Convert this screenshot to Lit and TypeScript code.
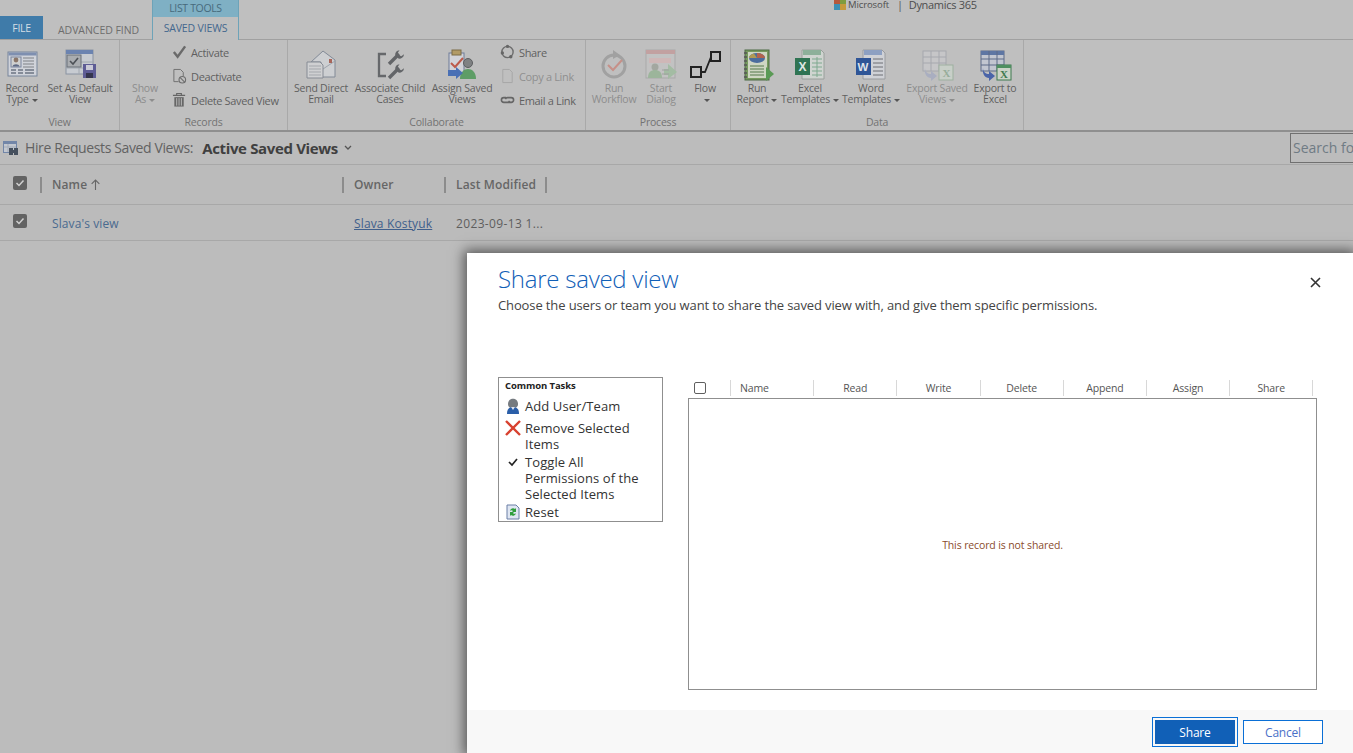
import { LitElement, html, css, svg } from "lit";
import { customElement } from "lit/decorators.js";

const icons: Record<string, any> = {
  record: svg`<rect x="2" y="3" width="29" height="24" fill="#d0d3da" stroke="#78869b"/><rect x="2.500" y="3.500" width="28" height="3" fill="#7e8fb0"/><rect x="5" y="8" width="10" height="10" fill="#cfd0d0" stroke="#7a86a0"/><circle cx="10" cy="11" r="2.400" fill="#8a7568"/><path d="M6.500 17.500c.5-3 6.500-3 7 0z" fill="#5d6985"/><path d="M17 9h11M17 12h11M17 15h11M17 18h11" stroke="#7f8186"/><path d="M5 21h5M12 21h5M19 21h9M5 24h5M12 24h5M19 24h9" stroke="#858c98" stroke-width="2"/>`,
  setdefault: svg`<rect x="2" y="1" width="27" height="24" fill="#c7cbd1" stroke="#8a93a2"/><rect x="2" y="1" width="27" height="4" fill="#6b83b0"/><path d="M2 13h27M2 19h27M15 13v12" stroke="#a2a8b0"/><rect x="3" y="6" width="14" height="12" fill="#a9acb0" stroke="#6b7078"/><path d="M6 12l3 3 5-6" stroke="#4d5157" stroke-width="1.600" fill="none"/><rect x="19" y="15" width="13" height="14" fill="#5e5c95"/><rect x="22" y="16" width="7" height="5" fill="#c9c9d6"/><rect x="22" y="24" width="7" height="5" fill="#35354e"/>`,
  email: svg`<path d="M6 13L18 2l12 9v17H16V13z" fill="#cdcfd2" stroke="#828a97"/><path d="M7 12l11 8 12-8" fill="none" stroke="#9da3ac"/><rect x="24" y="10" width="3" height="4" fill="#a8665a"/><path d="M2 13h13l3 3v13H2z" fill="#cfd0d2" stroke="#868b94"/><path d="M4 17h12M4 20h12M4 23h12M4 26h12" stroke="#a4a7ac"/>`,
  assoc: svg`<path d="M12 5H5v22h7" fill="none" stroke="#66686b" stroke-width="2.300"/><path d="M15 15L25 5" stroke="#636568" stroke-width="3.400"/><path d="M25.500 1.200a4.800 4.800 0 0 0-4.300 5l3.600 3.600a4.800 4.800 0 0 0 5.200-4.600l-2.800 2-2.600-1.200-.6-2.600z" fill="#636568"/><path d="M15 29l10-10" stroke="#636568" stroke-width="3.400"/><path d="M25.500 15.200a4.800 4.800 0 0 0-4.300 5l3.600 3.600a4.800 4.800 0 0 0 5.200-4.600l-2.800 2-2.600-1.200-.6-2.600z" fill="#636568"/>`,
  assign: svg`<rect x="3" y="4" width="15" height="21" fill="#d2d3d8" stroke="#6e7c99"/><rect x="6" y="1" width="9" height="5" fill="#b29b66" stroke="#7d6d46"/><path d="M5 14l4 4 8-9" fill="none" stroke="#bd5a4a" stroke-width="2"/><circle cx="22" cy="14" r="4.500" fill="#7f8183" stroke="#5d5f61"/><path d="M14 30c0-7 4-10 8-10s8 3 8 10z" fill="#5e9d66"/><path d="M2 21h8v-3l7 6-7 6v-3H2z" fill="#4a70b5"/>`,
  runwf: svg`<circle cx="16" cy="17" r="11" fill="none" stroke="#a1a1a1" stroke-width="3"/><path d="M15 1l7 5-7 4z" fill="#a1a1a1"/><path d="M10 16l5 5 9-10" fill="none" stroke="#c69088" stroke-width="2"/>`,
  dialog: svg`<rect x="1" y="1" width="29" height="28" fill="#c2c2c2" stroke="#a9a9a9"/><rect x="1" y="1" width="29" height="4" fill="#c2a1a1"/><rect x="4" y="9" width="22" height="5" fill="#cfb7b7"/><circle cx="10" cy="18" r="3.500" fill="#a3a7a0"/><path d="M3 29c0-6 3-8 7-8s7 2 7 8z" fill="#9cb59b"/><path d="M19 20h4v-5l9 8-9 7v-4h-4z" fill="#a3bca3"/><path d="M17 21h7M17 25h7" stroke="#a0a0a0"/>`,
  flow: svg`<rect x="2" y="18" width="10" height="10" fill="none" stroke="#222" stroke-width="2"/><rect x="22" y="3" width="9" height="9" fill="none" stroke="#222" stroke-width="2"/><path d="M12 23h4l6-15h0" fill="none" stroke="#222" stroke-width="1.800"/>`,
  report: svg`<rect x="4" y="1" width="24" height="30" fill="#779a5f" stroke="#4d6b45"/><path d="M3 4h3M3 8h3M3 12h3M3 16h3M3 20h3M3 24h3M3 28h3" stroke="#555" stroke-width="1.500"/><rect x="7" y="3" width="19" height="26" fill="#cfd6c3"/><ellipse cx="16" cy="9" rx="8" ry="5" fill="#4b6d9d"/><path d="M16 9V4a8 5 0 0 1 8 5z" fill="#b2634f"/><path d="M16 9l-8 0a8 5 0 0 1 5-4.500z" fill="#b09a55"/><path d="M9 17h14M9 20h14M9 23h14M9 26h14" stroke="#55784a"/><path d="M25 18l8 7-8 7z" fill="#5a9a55"/>`,
  excel: svg`<path d="M8 1h19l3 3v26H8z" fill="#cfd4d0" stroke="#9aa09c"/><rect x="9" y="1" width="18" height="5" fill="#8db09a"/><path d="M18 10h10M18 14h10M18 18h10M18 22h10M18 26h10M23 8v20" stroke="#7fa98f"/><rect x="1" y="9" width="15" height="17" fill="#2f7453"/><text x="4.500" y="22" font-size="12" font-weight="700" fill="#dfe8e2" font-family="Liberation Sans">X</text>`,
  word: svg`<path d="M8 1h19l3 3v26H8z" fill="#cfd1d6" stroke="#9a9ca0"/><rect x="9" y="1" width="18" height="5" fill="#8da0c2"/><path d="M18 10h10M18 14h10M18 18h10M18 22h10M18 26h10" stroke="#6c6f75"/><rect x="1" y="9" width="15" height="17" fill="#2f5597"/><text x="2.500" y="22" font-size="11.500" font-weight="700" fill="#dfe3ea" font-family="Liberation Sans">W</text>`,
  exportsaved: svg`<rect x="2" y="2" width="23" height="20" fill="#c6c6c8" stroke="#a6a8ae"/><path d="M2 8h23M2 14h23M10 2v20M18 2v20" stroke="#a6a8ae"/><path d="M4 19c0 4 3 6 6 6v-3l6 5-6 5v-3c-4 0-7-4-6-10z" fill="#a9aec0"/><rect x="18" y="16" width="14" height="15" fill="#c8cfc8" stroke="#9db09f"/><text x="21.500" y="28" font-size="11" font-weight="700" fill="#97ad9a" font-family="Liberation Serif">X</text>`,
  exportexcel: svg`<rect x="2" y="2" width="23" height="20" fill="#c2c6d0" stroke="#5d6a88"/><rect x="2" y="2" width="23" height="4" fill="#5e76a3"/><path d="M2 10h23M2 16h23M10 2v20M18 2v20" stroke="#5d6a88"/><path d="M4 19c0 4 3 6 6 6v-3l6 5-6 5v-3c-4 0-7-4-6-10z" fill="#4a64a8"/><rect x="18" y="16" width="14" height="15" fill="#ccd3c8" stroke="#3f7a50"/><rect x="18" y="16" width="14" height="3" fill="#4f8f60"/><text x="21" y="29" font-size="11" font-weight="700" fill="#3f7a50" font-family="Liberation Serif">X</text>`,
};

const smallIcons: Record<string, any> = {
  check: svg`<path d="M2 8l4 5 8-11" fill="none" stroke="#6a6a6a" stroke-width="2.600"/>`,
  deact: svg`<path d="M2 1h7l3 3v4M2 1v13h5" fill="none" stroke="#6e6e6e"/><circle cx="11" cy="12" r="3.500" fill="none" stroke="#6e6e6e" stroke-width="1.200"/><path d="M8.500 9.500l5 5" stroke="#6e6e6e" stroke-width="1.200"/>`,
  trash: svg`<path d="M1 3h13M5 3V1h5v2" fill="none" stroke="#666" stroke-width="1.200"/><path d="M2.500 5h10v10h-10z" fill="#666"/><path d="M5 6v8M7.500 6v8M10 6v8" stroke="#bdbdbd"/>`,
  share: svg`<circle cx="8" cy="8" r="6" fill="none" stroke="#6d6d6d" stroke-width="1.500"/><circle cx="8" cy="2" r="1.800" fill="#666"/><circle cx="2.500" cy="9" r="1.800" fill="#666"/><circle cx="11.500" cy="13" r="1.800" fill="#666"/>`,
  copy: svg`<path d="M3 1h7l3 3v11H3z" fill="none" stroke="#a5a5a5"/>`,
  link: svg`<path d="M6.500 5.500H4a2.500 2.500 0 0 0 0 5h4a2.500 2.500 0 0 0 2.300-1.500M9.500 10.500H12a2.500 2.500 0 0 0 0-5H8a2.500 2.500 0 0 0-2.300 1.500" fill="none" stroke="#666" stroke-width="1.700"/>`,
};

type Big = { w: number; lines: string[]; icon?: string; caret?: boolean; dim?: boolean };
type Small = { label: string; icon: string; dim?: boolean };
type Group = { label: string; w: number; big: Big[]; small?: Small[] };

const groups: Group[] = [
  { label: "View", w: 120, big: [
    { w: 44, lines: ["Record", "Type"], icon: "record", caret: true },
    { w: 72, lines: ["Set As Default", "View"], icon: "setdefault" },
  ] },
  { label: "Records", w: 168, big: [{ w: 50, lines: ["Show", "As"], caret: true, dim: true }], small: [
    { label: "Activate", icon: "check" },
    { label: "Deactivate", icon: "deact" },
    { label: "Delete Saved View", icon: "trash" },
  ] },
  { label: "Collaborate", w: 298, big: [
    { w: 66, lines: ["Send Direct", "Email"], icon: "email" },
    { w: 72, lines: ["Associate Child", "Cases"], icon: "assoc" },
    { w: 72, lines: ["Assign Saved", "Views"], icon: "assign" },
  ], small: [
    { label: "Share", icon: "share" },
    { label: "Copy a Link", icon: "copy", dim: true },
    { label: "Email a Link", icon: "link" },
  ] },
  { label: "Process", w: 145, big: [
    { w: 56, lines: ["Run", "Workflow"], icon: "runwf", dim: true },
    { w: 38, lines: ["Start", "Dialog"], icon: "dialog", dim: true },
    { w: 50, lines: ["Flow", ""], icon: "flow", caret: true },
  ] },
  { label: "Data", w: 293, big: [
    { w: 52, lines: ["Run", "Report"], icon: "report", caret: true },
    { w: 54, lines: ["Excel", "Templates"], icon: "excel", caret: true },
    { w: 68, lines: ["Word", "Templates"], icon: "word", caret: true },
    { w: 64, lines: ["Export Saved", "Views"], icon: "exportsaved", caret: true, dim: true },
    { w: 52, lines: ["Export to", "Excel"], icon: "exportexcel" },
  ] },
];

const perms = ["Read", "Write", "Delete", "Append", "Assign", "Share"];

@customElement("app-root")
export class AppRoot extends LitElement {
  static styles = css`
    :host {
      display: block;
      position: relative;
      width: 1353px;
      height: 753px;
      overflow: hidden;
      background: #bcbcbc;
      color: #5f5f5f;
      font-family: "Open Sans", "Noto Sans", sans-serif;
      font-size: 11px;
      letter-spacing: -0.35px;
    }
    .tabs { display: flex; height: 40px; border-bottom: 1px solid #a0a0a0; box-sizing: border-box; background: #bfbfbf; }
    .file { width: 43px; height: 23px; margin-top: 16px; background: #3f7ba9; color: #d4dee6; display: flex; align-items: center; justify-content: center; font-size: 10.500px; }
    .adv { width: 109px; padding: 23px 0 0 15px; box-sizing: border-box; color: #6d6d6d; font-size: 10.500px; white-space: nowrap; letter-spacing: -0.05px; }
    .ctx { width: 87px; height: 40px; border: solid #6da3b8; border-width: 0 1px; box-sizing: border-box; display: flex; flex-direction: column; align-items: center; text-align: center; background: #bfbfbf; }
    .ctx-top { align-self: stretch; height: 17px; background: #7fb0c4; color: #476a7c; line-height: 16px; font-size: 10.500px; }
    .ctx-body { color: #43678e; font-size: 10.500px; padding-top: 4px; letter-spacing: -0.15px; }
    .brand { display: flex; align-items: center; margin: -5px 0 0 595px; height: 18px; color: #4e4e4e; white-space: nowrap; }
    .ms { display: grid; grid-template-columns: 6px 6px; grid-auto-rows: 6px; margin-right: 2px; }
    .ms i:nth-child(1) { background: #b6583c; }
    .ms i:nth-child(2) { background: #7f9c3d; }
    .ms i:nth-child(3) { background: #3c8fb5; }
    .ms i:nth-child(4) { background: #c69a3a; }
    .msname { font-size: 9.500px; letter-spacing: -0.1px; }
    .bar { margin: 0 6px 0 8px; color: #555; }
    .d365 { font-size: 11px; letter-spacing: -0.3px; }

    .ribbon { display: flex; height: 90px; border-bottom: 2px solid #8f8f8f; background: #bfbfbf; }
    .group { display: flex; flex-direction: column; border-right: 1px solid #a9a9a9; box-sizing: border-box; }
    .group-body { display: flex; height: 75px; flex: none; }
    .group-label { text-align: center; line-height: 14px; height: 15px; color: #737373; font-size: 10.500px; letter-spacing: -0.2px; }
    .big { display: flex; flex-direction: column; align-items: center; padding-top: 9px; box-sizing: border-box; }
    .big.dim { color: #8d8d8d; }
    .big-icon { width: 33px; height: 33px; flex: none; }
    .no-icon { height: 33px; flex: none; }
    .big-text { margin-top: 1px; text-align: center; line-height: 11px; white-space: nowrap; font-size: 10.500px; letter-spacing: -0.22px; }
    .big-text div { min-height: 11px; }
    .caret { display: inline-block; width: 0; height: 0; margin-left: 3px; vertical-align: 1px; border: solid transparent; border-width: 3px 3px 0; border-top-color: #555; }
    .dim .caret { border-top-color: #8d8d8d; }
    .small-col { display: flex; flex-direction: column; padding: 0 0 0 2px; }
    .small { display: flex; align-items: center; height: 24px; gap: 4px; white-space: nowrap; }
    .small svg { width: 15px; height: 16px; flex: none; }
    .small.dim { color: #8f8f8f; }

    .viewbar { display: flex; align-items: center; height: 32px; border-bottom: 1px solid #a8a8a8; overflow: hidden; }
    .viewbar-left { width: 1290px; flex: none; display: flex; align-items: center; box-sizing: border-box; padding-left: 3px; }
    .vb-icon { width: 17px; height: 17px; margin-right: 5px; }
    .vb-entity { font-size: 14px; color: #626262; letter-spacing: -0.38px; margin-top: -1px; }
    .vb-name { font-size: 15px; font-weight: 700; color: #404040; margin: -1px 0 0 9px; letter-spacing: -0.35px; }
    .vb-chev { margin-left: 6px; width: 8px; height: 6px; }
    .search { flex: none; width: 120px; height: 30px; border: 1px solid #707070; box-sizing: border-box; padding-left: 2px; line-height: 28px; font-size: 14px; color: #6f7b84; white-space: nowrap; letter-spacing: 0; }

    .ghead, .grow { display: flex; align-items: center; border-bottom: 1px solid #a8a8a8; background: #bbbbbb; font-size: 12px; }
    .ghead { height: 39px; color: #666; font-weight: 600; letter-spacing: 0.12px; }
    .grow { height: 35px; letter-spacing: 0.1px; }
    .gcheck { width: 40px; flex: none; padding-left: 13px; box-sizing: border-box; display: flex; margin-bottom: 3px; }
    .box { width: 14px; height: 14px; border-radius: 2px; background: #636363; display: flex; align-items: center; justify-content: center; }
    .box svg { width: 10px; height: 10px; }
    .gc { flex: none; box-sizing: border-box; padding-left: 10px; height: 16px; line-height: 16px; white-space: nowrap; }
    .ghead .gc { border-left: 2px solid #8c8c8c; }
    .grow .gc { padding-left: 12px; margin-top: 2px; }
    .c1 { width: 302px; }
    .c2 { width: 102px; }
    .c3 { width: 103px; }
    .ghead .c3 { border-right: 2px solid #8c8c8c; }
    .arrow { width: 11px; height: 11px; margin-left: 0; vertical-align: -1px; }
    .lnk { color: #4a6a8f; }
    .lnk2 { color: #41608c; text-decoration: underline; letter-spacing: 0.15px; }
    .date { color: #5e5e5e; letter-spacing: 0.35px; }

    .dialog { position: absolute; left: 467px; top: 253px; right: 0; bottom: 0; background: #fff; box-shadow: 0 0 12px 3px rgba(0,0,0,.55); display: flex; flex-direction: column; color: #444; }
    .dlg-main { flex: 1; padding: 10px 36px 0 31px; display: flex; flex-direction: column; min-height: 0; }
    .dlg-head { display: flex; justify-content: space-between; align-items: flex-start; }
    .dlg-title { font-size: 24px; font-weight: 300; color: #1160b7; line-height: 32px; letter-spacing: -0.25px; }
    .dlg-sub { font-size: 13px; line-height: 18px; color: #444; letter-spacing: -0.12px; margin-top: 1px; white-space: nowrap; }
    .close { width: 11px; height: 11px; margin: 14px -4px 0 0; }
    .dlg-body { display: flex; margin-top: 63px; gap: 25px; flex: 1; min-height: 0; }
    .tasks { width: 165px; height: 145px; border: 1px solid #8f8f8f; box-sizing: border-box; padding: 1px 6px 0; font-size: 13px; color: #333; letter-spacing: 0.08px; }
    .tasks-h { font-weight: 700; font-size: 9.500px; line-height: 13px; color: #222; margin-bottom: 6px; letter-spacing: -0.1px; }
    .task { display: flex; line-height: 16px; padding-bottom: 6px; }
    .task.tight { padding-bottom: 2px; }
    .task span { max-width: 125px; }
    .task svg { width: 16px; height: 16px; flex: none; margin: 0 4px 0 0; }
    .perm { flex: 1; display: flex; flex-direction: column; height: 313px; min-width: 0; }
    .phead { display: flex; height: 21px; align-items: center; font-size: 10.500px; color: #555; letter-spacing: -0.15px; }
    .pbox { width: 42px; flex: none; box-sizing: border-box; padding-left: 6px; display: flex; }
    .cb { width: 12px; height: 12px; border: 1px solid #5f5f5f; border-radius: 2px; box-sizing: border-box; background: #fff; }
    .pc { flex: none; width: 83.200px; height: 16px; line-height: 16px; border-left: 1px solid #d8d8d8; box-sizing: border-box; text-align: center; }
    .pc.name { padding-left: 9px; text-align: left; }
    .pc.last { width: 1px; }
    .ptable { flex: 1; border: 1px solid #8f8f8f; display: flex; align-items: center; justify-content: center; color: #8a4b2c; font-size: 10.500px; letter-spacing: -0.12px; padding-top: 2px; box-sizing: border-box; }
    .dlg-foot { height: 43px; background: #f8f8f8; display: flex; align-items: center; justify-content: flex-end; padding-right: 30px; gap: 5px; flex: none; }
    .btn { width: 80px; height: 24px; box-sizing: border-box; display: flex; align-items: center; justify-content: center; font-size: 12px; letter-spacing: -0.2px; padding-top: 2px; }
    .primary { background: #1160b7; color: #fff; outline: 1px solid #0a6fd6; outline-offset: 2px; margin-right: 3px; }
    .secondary { background: #fff; color: #4a70c8; border: 1px solid #0a6fd6; }
  `;

  private big(b: Big) {
    return html`<div class="big ${b.dim ? "dim" : ""}" style="width:${b.w}px">
      ${b.icon ? html`<svg class="big-icon" viewBox="0 0 33 33">${icons[b.icon]}</svg>` : html`<div class="no-icon"></div>`}
      <div class="big-text">
        <div>${b.lines[0]}</div>
        <div>${b.lines[1]}${b.caret ? html`<span class="caret"></span>` : ""}</div>
      </div>
    </div>`;
  }

  private tick() {
    return html`<svg viewBox="0 0 10 10"><path d="M1.500 5l2.500 2.500 4.500-5" fill="none" stroke="#d0d0d0" stroke-width="1.500"/></svg>`;
  }

  render() {
    return html`
      <div class="tabs">
        <div class="file">FILE</div>
        <div class="adv">ADVANCED FIND</div>
        <div class="ctx">
          <div class="ctx-top">LIST TOOLS</div>
          <div class="ctx-body">SAVED VIEWS</div>
        </div>
        <div class="brand">
          <div class="ms"><i></i><i></i><i></i><i></i></div>
          <span class="msname">Microsoft</span><span class="bar">|</span><span class="d365">Dynamics 365</span>
        </div>
      </div>
      <div class="ribbon">
        ${groups.map((g) => html`<div class="group" style="width:${g.w}px">
          <div class="group-body">
            ${g.big.map((b) => this.big(b))}
            ${g.small ? html`<div class="small-col">${g.small.map((s) => html`<div class="small ${s.dim ? "dim" : ""}">
              <svg viewBox="0 0 16 16">${smallIcons[s.icon]}</svg><span>${s.label}</span></div>`)}</div>` : ""}
          </div>
          <div class="group-label">${g.label}</div>
        </div>`)}
      </div>
      <div class="viewbar">
        <div class="viewbar-left">
          <svg class="vb-icon" viewBox="0 0 17 17"><rect x="0.500" y="1.500" width="13" height="11" fill="#c3c8d0" stroke="#7286a8"/><rect x="1" y="2" width="12" height="2" fill="#7286a8"/><path d="M1 7h12M5 4v8" stroke="#a3abb8"/><rect x="6" y="8" width="4" height="7" fill="#46505e"/><rect x="11" y="8" width="4" height="7" fill="#46505e"/><rect x="9" y="10" width="3" height="3" fill="#46505e"/></svg>
          <span class="vb-entity">Hire Requests Saved Views:</span>
          <span class="vb-name">Active Saved Views</span>
          <svg class="vb-chev" viewBox="0 0 8 6"><path d="M1 1l3 3 3-3" fill="none" stroke="#555" stroke-width="1.300"/></svg>
        </div>
        <div class="search">Search for records</div>
      </div>
      <div class="ghead">
        <div class="gcheck"><div class="box">${this.tick()}</div></div>
        <div class="gc c1">Name <svg class="arrow" viewBox="0 0 9 10"><path d="M4.500 10V1M1 4.500l3.500-3.500 3.500 3.500" fill="none" stroke="#666"/></svg></div>
        <div class="gc c2">Owner</div>
        <div class="gc c3">Last Modified</div>
      </div>
      <div class="grow">
        <div class="gcheck"><div class="box">${this.tick()}</div></div>
        <div class="gc c1 lnk">Slava's view</div>
        <div class="gc c2 lnk2">Slava Kostyuk</div>
        <div class="gc c3 date">2023-09-13 1...</div>
      </div>

      <div class="dialog">
        <div class="dlg-main">
          <div class="dlg-head">
            <div>
              <div class="dlg-title">Share saved view</div>
              <div class="dlg-sub">Choose the users or team you want to share the saved view with, and give them specific permissions.</div>
            </div>
            <svg class="close" viewBox="0 0 11 11"><path d="M1 1l9 9M10 1l-9 9" stroke="#333" stroke-width="1.600"/></svg>
          </div>
          <div class="dlg-body">
            <div class="tasks">
              <div class="tasks-h">Common Tasks</div>
              <div class="task">
                <svg viewBox="0 0 16 16"><path d="M3 6c0-7 10-7 10 0 0 3-2 4-5 4S3 9 3 6z" fill="#767b80"/><path d="M2 16c0-5 2-7 6-7s6 2 6 7z" fill="#2a5ea8"/><path d="M6 9l2 3 2-3z" fill="#dfe5ee"/></svg>
                <span>Add User/Team</span>
              </div>
              <div class="task tight">
                <svg viewBox="0 0 16 16"><path d="M1 1l14 14M15 1L1 15" stroke="#d8412f" stroke-width="2.400"/></svg>
                <span>Remove Selected Items</span>
              </div>
              <div class="task tight">
                <svg viewBox="0 0 16 16"><path d="M4 8l3 3 5-6" fill="none" stroke="#222" stroke-width="1.700"/></svg>
                <span>Toggle All Permissions of the Selected Items</span>
              </div>
              <div class="task">
                <svg viewBox="0 0 16 16"><path d="M2 1h9l3 3v11H2z" fill="#dfe6f2" stroke="#6b7fa6"/><path d="M5 7a3 3 0 0 1 5-2l1-1v4H7l1-1a2 2 0 0 0-3 0zM11 9a3 3 0 0 1-5 2l-1 1V8h4l-1 1a2 2 0 0 0 3 0z" fill="#2f9e3c"/></svg>
                <span>Reset</span>
              </div>
            </div>
            <div class="perm">
              <div class="phead">
                <div class="pbox"><div class="cb"></div></div>
                <div class="pc name">Name</div>
                ${perms.map((p) => html`<div class="pc">${p}</div>`)}
                <div class="pc last"></div>
              </div>
              <div class="ptable">This record is not shared.</div>
            </div>
          </div>
        </div>
        <div class="dlg-foot">
          <div class="btn primary">Share</div>
          <div class="btn secondary">Cancel</div>
        </div>
      </div>
    `;
  }
}
